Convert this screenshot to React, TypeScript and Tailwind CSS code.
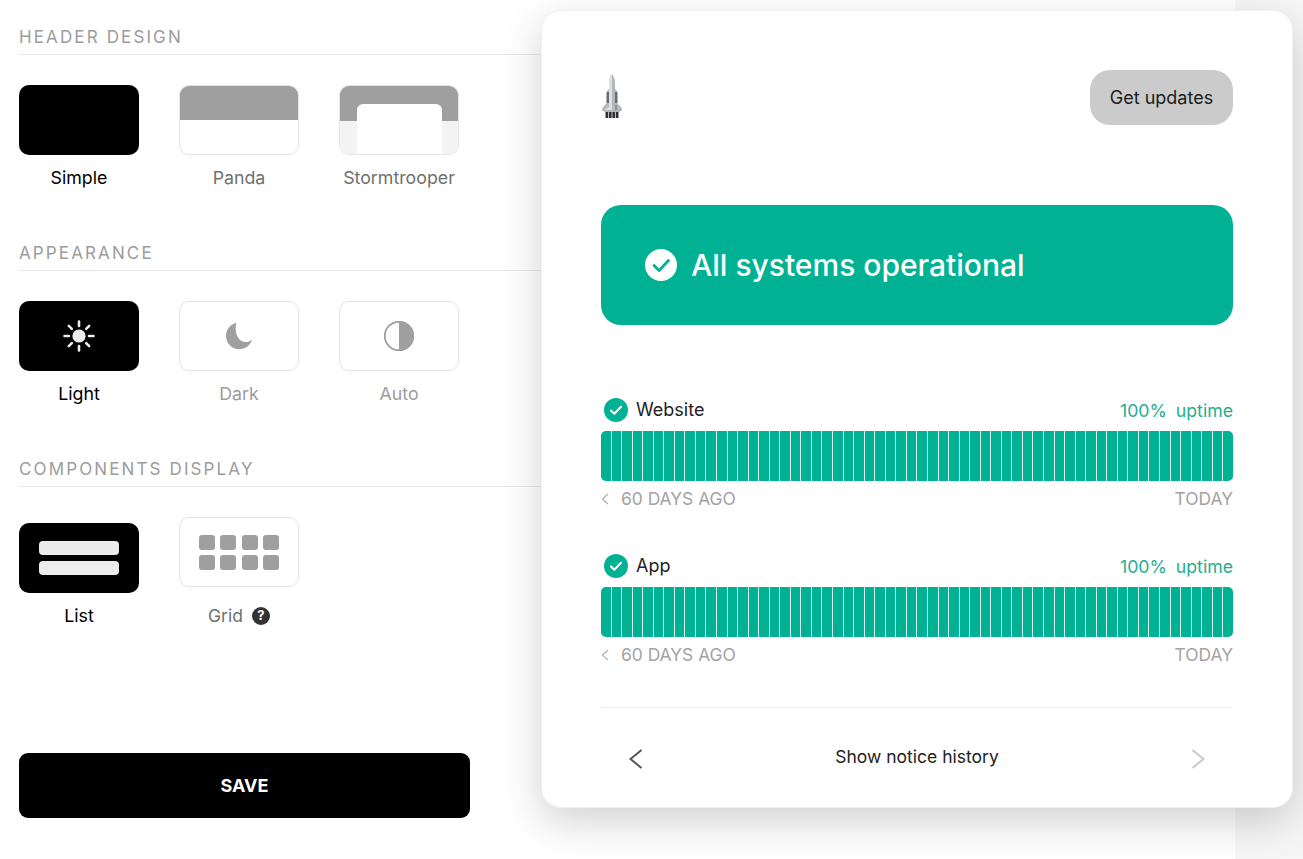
const segments = Array.from({ length: 60 }, (_, i) => i)

function SectionTitle({ children }: { children: string }) {
  return (
    <div className="h-[26px] border-b border-[#e9e9e9] text-[17px] leading-[17px] tracking-[0.125em] text-[#9c9c9c]">
      {children}
    </div>
  )
}

function Option({
  label,
  active,
  muted,
  children,
}: {
  label: React.ReactNode
  active?: boolean
  muted?: boolean
  children?: React.ReactNode
}) {
  return (
    <div className="flex w-[120px] flex-col items-center">
      <div
        className={
          active
            ? 'flex h-[70px] w-[120px] items-center justify-center overflow-hidden rounded-[10px] bg-black'
            : 'flex h-[70px] w-[120px] items-center justify-center overflow-hidden rounded-[10px] border border-[#e4e4e4] bg-white'
        }
      >
        {children}
      </div>
      <div
        className={
          active
            ? 'mt-[12px] text-[17.8px] leading-[22px] text-black'
            : muted
              ? 'mt-[12px] text-[17.8px] leading-[22px] text-[#9c9c9c]'
              : 'mt-[12px] text-[17.8px] leading-[22px] text-[#70706c]'
        }
      >
        {label}
      </div>
    </div>
  )
}

function SunIcon() {
  return (
    <svg width="32" height="32" viewBox="0 0 32 32" fill="none">
      <circle cx="16" cy="16" r="6.6" fill="#ececec" />
      <g stroke="#ececec" strokeWidth="2.6" strokeLinecap="round">
        <path d="M16 1.500v4.500M16 26v4.500M1.500 16h4.500M26 16h4.500M5.800 5.800l3 3M23.200 23.200l3 3M5.800 26.200l3-3M23.200 8.800l3-3" />
      </g>
    </svg>
  )
}

function MoonIcon() {
  return (
    <svg width="28" height="28" viewBox="0 0 28 28" className="-ml-[1px]">
      <path d="M11.500 0.800C5.500 2.200 1 7.400 1 14c0 7.200 5.800 13.200 13.200 13.200 6 0 11-3.800 12.800-9.500-2 1.800-4.800 2.700-7.500 2.300C13 19 8.800 10.500 11.500 0.800Z" fill="#9f9f9f" />
    </svg>
  )
}

function HalfIcon() {
  return (
    <svg width="32" height="32" viewBox="0 0 32 32">
      <circle cx="16" cy="16" r="14.2" fill="none" stroke="#9f9f9f" strokeWidth="1.8" />
      <path d="M16 1a15 15 0 0 1 0 30Z" fill="#9f9f9f" />
    </svg>
  )
}

function CheckBadge({ size }: { size: number }) {
  return (
    <svg width={size} height={size} viewBox="0 0 24 24">
      <circle cx="12" cy="12" r="12" fill="#00b293" />
      <path d="M7 12.500l3.300 3.200L17 8.800" fill="none" stroke="#fff" strokeWidth="2" strokeLinecap="round" strokeLinejoin="round" />
    </svg>
  )
}

function Rocket() {
  return (
    <svg width="22" height="46" viewBox="0 0 22 46">
      <path d="M11 0c1.600 2 2.600 4.500 3 8v7l2 2v12l4.500 4.500.5 3-3 1.500H4l-3-1.500.5-3L6 29V17l2-2V8c.4-3.500 1.400-6 3-8Z" fill="#b4b7bc" />
      <path d="M11 0C9.400 2 8.400 4.500 8 8v25l-5 3h8Z" fill="#dfe0e3" />
      <path d="M5.500 18h2.500v11H5.500zM14 18h2.500v11H14z" fill="#686b70" />
      <path d="M14 31h2v5h-2z" fill="#8d9095" />
      <path d="M4.500 38h13v6h-13z" fill="#2f3136" />
      <path d="M7.500 38v6M11 38v6M14.500 38v6" stroke="#bdbdbd" strokeWidth="1" />
    </svg>
  )
}

function StatusRow({ name }: { name: string }) {
  return (
    <div>
      <div className="flex h-[26px] items-center">
        <div className="ml-[3px]">
          <CheckBadge size={24} />
        </div>
        <span className="mb-[2px] ml-[8px] text-[18px] text-[#222]">{name}</span>
        <span className="ml-auto mt-[2px] text-[17.7px] text-[#1fae92]">
          100%<span className="ml-[9px]">uptime</span>
        </span>
      </div>
      <div className="mt-[8px] flex h-[50px] gap-px overflow-hidden rounded-[5px] bg-[#d5f5ed]">
        {segments.map((s) => (
          <div key={s} className="flex-1 bg-[#00b293]" />
        ))}
      </div>
      <div className="mt-[6px] flex h-[24px] items-center text-[17.4px] text-[#a3a3a3]">
        <svg width="8" height="12" viewBox="0 0 8 12" fill="none" stroke="#b5b5b5" strokeWidth="1.4">
          <path d="M7 1 1.500 6 7 11" />
        </svg>
        <span className="ml-[12px]">60 DAYS AGO</span>
        <span className="ml-auto">TODAY</span>
      </div>
    </div>
  )
}

export default function App() {
  return (
    <div className="relative h-[859px] w-[1303px] overflow-hidden bg-[#f6f6f6] font-['Inter',sans-serif]">
      {/* Settings panel */}
      <div className="h-full w-[1235px] bg-white pl-[19px] pt-[29px]">
        <SectionTitle>HEADER DESIGN</SectionTitle>
        <div className="mt-[30px] flex gap-[40px]">
          <Option label="Simple" active />
          <Option label="Panda">
            <div className="flex h-full w-full flex-col">
              <div className="h-[34px] bg-[#9f9f9f]" />
            </div>
          </Option>
          <Option label="Stormtrooper">
            <div className="relative h-full w-full bg-[#f3f3f3]">
              <div className="h-[35px] bg-[#9f9f9f]" />
              <div className="absolute bottom-0 left-[17px] h-[50px] w-[85px] rounded-t-[6px] bg-white" />
            </div>
          </Option>
        </div>

        <div className="mt-[56px]">
          <SectionTitle>APPEARANCE</SectionTitle>
        </div>
        <div className="mt-[30px] flex gap-[40px]">
          <Option label="Light" active>
            <SunIcon />
          </Option>
          <Option label="Dark" muted>
            <MoonIcon />
          </Option>
          <Option label="Auto" muted>
            <HalfIcon />
          </Option>
        </div>

        <div className="mt-[56px]">
          <SectionTitle>COMPONENTS DISPLAY</SectionTitle>
        </div>
        <div className="mt-[30px] flex gap-[40px]">
          <div className="mt-[6px]">
            <Option label="List" active>
              <div className="flex flex-col gap-[6px]">
                <div className="h-[14px] w-[80px] rounded-[4px] bg-[#ececec]" />
                <div className="h-[14px] w-[80px] rounded-[4px] bg-[#ececec]" />
              </div>
            </Option>
          </div>
          <div className="flex w-[120px] flex-col items-center">
            <div className="flex h-[70px] w-[120px] items-center justify-center rounded-[10px] border border-[#e4e4e4] bg-white">
              <div className="grid grid-cols-[repeat(4,16px)] gap-x-[5.33px] gap-y-[5px]">
                {[0, 1, 2, 3, 4, 5, 6, 7].map((i) => (
                  <div key={i} className="h-[15px] rounded-[3px] bg-[#9f9f9f]" />
                ))}
              </div>
            </div>
            <div className="mt-[18px] flex items-center gap-[9px] text-[17.5px] leading-[22px] text-[#70706c]">
              Grid
              <span className="-mt-[1px] flex size-[18px] items-center justify-center rounded-full bg-[#333] text-[13px] font-bold leading-none text-white">
                ?
              </span>
            </div>
          </div>
        </div>

        <button className="mt-[126px] h-[65px] w-[451px] rounded-[9px] bg-black text-[18px] font-bold text-white">
          SAVE
        </button>
      </div>

      {/* Status preview card */}
      <div className="absolute left-[541px] top-[10px] h-[798px] w-[752px] rounded-[20px] border border-[#f0f0f0] bg-white px-[59px] pt-[59px] shadow-[0_14px_40px_rgba(0,0,0,0.18)]">
        <div className="flex h-[55px] items-center justify-between">
          <div className="-mt-[2px]">
            <Rocket />
          </div>
          <button className="h-[55px] w-[143px] rounded-[20px] bg-[#cbcbcb] text-[18px] text-[#1c1c1c]">
            Get updates
          </button>
        </div>

        <div className="mt-[80px] flex h-[120px] items-center rounded-[20px] bg-[#00b293] pl-[44px]">
          <svg width="32" height="32" viewBox="0 0 32 32">
            <circle cx="16" cy="16" r="16" fill="#fff" />
            <path d="M9 16.500l5 5 9.500-10" fill="none" stroke="#00b293" strokeWidth="2.800" strokeLinecap="round" strokeLinejoin="round" />
          </svg>
          <span className="ml-[14px] text-[30px] font-medium text-white">All systems operational</span>
        </div>

        <div className="mt-[72px]">
          <StatusRow name="Website" />
        </div>
        <div className="mt-[42px]">
          <StatusRow name="App" />
        </div>

        <div className="mt-[40px] flex h-[100px] items-center justify-between border-t border-[#efefef] px-[28px] text-[17.5px] text-[#222]">
          <svg width="14" height="20" viewBox="0 0 14 20" fill="none" stroke="#555" strokeWidth="2" className="mt-[2px]">
            <path d="M12.500 1 1.500 10l11 9" />
          </svg>
          <span>Show notice history</span>
          <svg width="14" height="20" viewBox="0 0 14 20" fill="none" stroke="#c8c8c8" strokeWidth="2" className="mt-[2px]">
            <path d="M1.500 1 12.500 10l-11 9" />
          </svg>
        </div>
      </div>
    </div>
  )
}
